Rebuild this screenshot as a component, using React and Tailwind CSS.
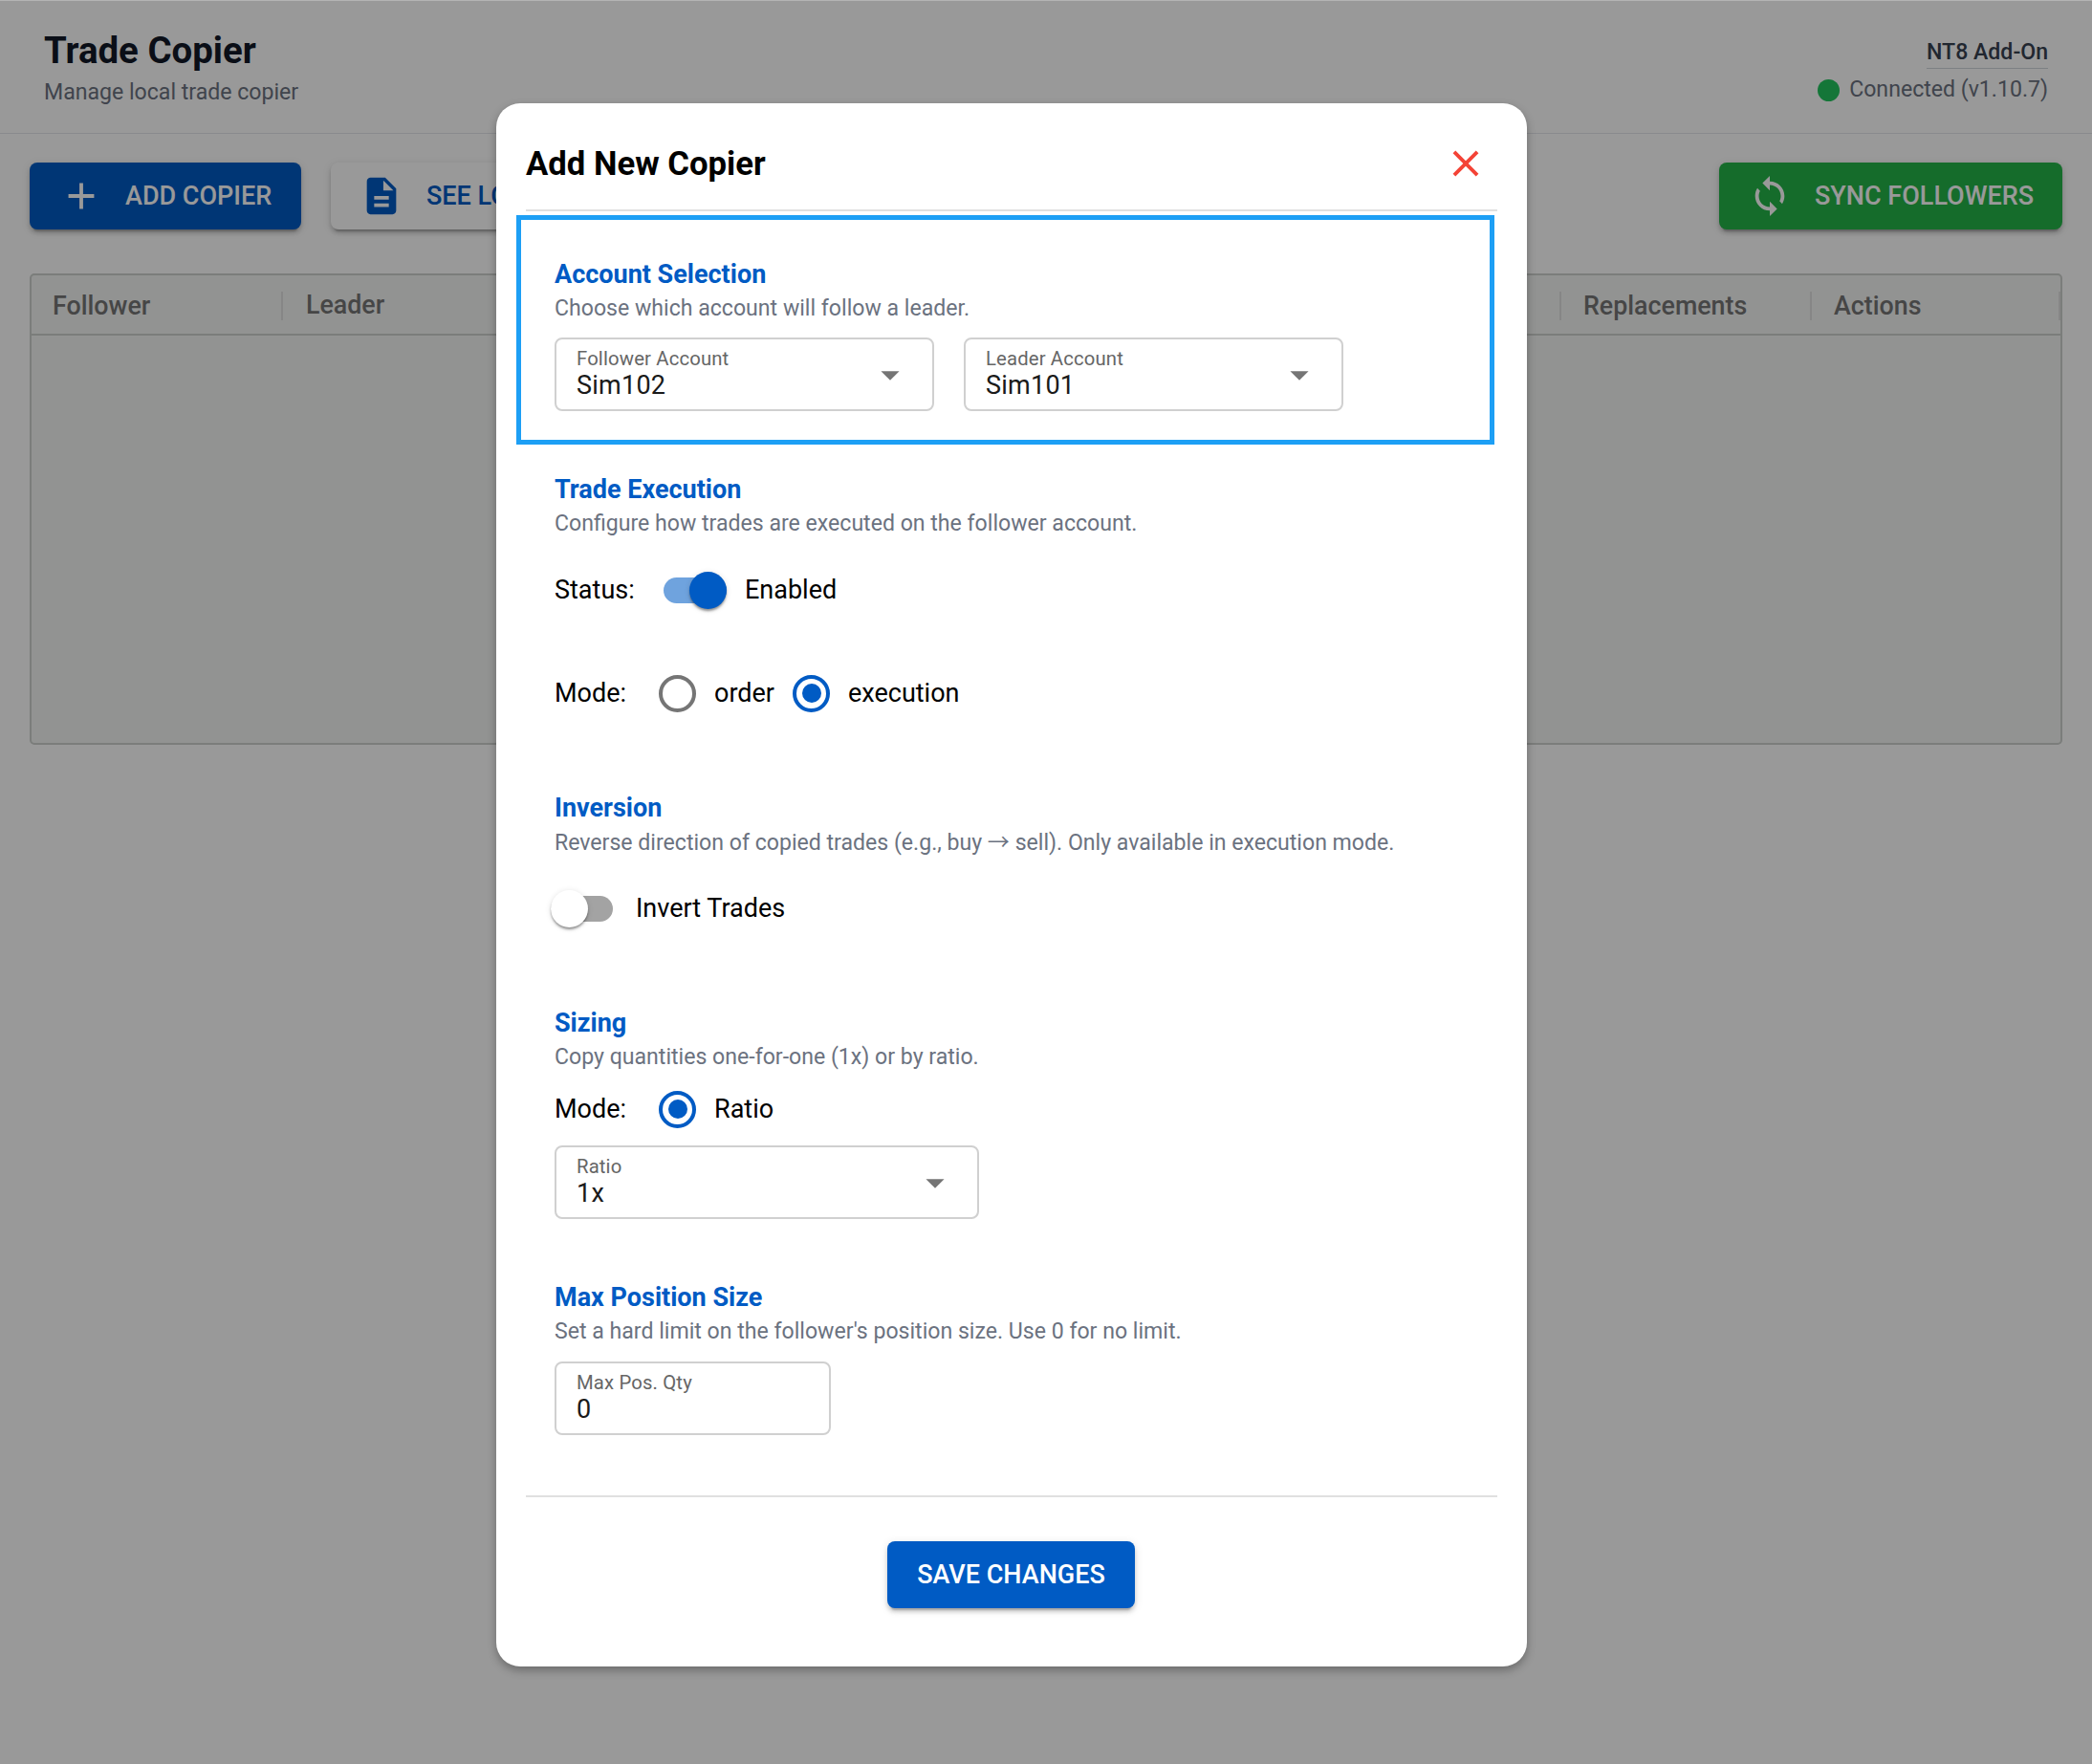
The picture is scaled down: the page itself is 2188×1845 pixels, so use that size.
import React from 'react';

const font = { fontFamily: 'Roboto, sans-serif' };

const btnShadow = 'shadow-[0_6px_2px_-4px_rgba(0,0,0,0.2),0_4px_4px_0_rgba(0,0,0,0.14),0_2px_10px_0_rgba(0,0,0,0.12)]';

function Icon({ d, className }) {
	return (
		<svg viewBox="0 0 24 24" className={className} fill="currentColor">
			<path d={d} />
		</svg>
	);
}

const ADD = 'M19 13h-6v6h-2v-6H5v-2h6V5h2v6h6v2z';
const DOC = 'M14 2H6c-1.1 0-1.99.9-1.99 2L4 20c0 1.1.89 2 1.99 2H18c1.1 0 2-.9 2-2V8l-6-6zm2 16H8v-2h8v2zm0-4H8v-2h8v2zm-3-5V3.5L18.5 9H13z';
const SYNC = 'M12 4V1L8 5l4 4V6c3.31 0 6 2.69 6 6 0 1.01-.25 1.97-.7 2.8l1.46 1.46C19.54 15.03 20 13.57 20 12c0-4.42-3.58-8-8-8zm0 14c-3.31 0-6-2.69-6-6 0-1.01.25-1.97.7-2.8L5.24 7.74C4.46 8.97 4 10.43 4 12c0 4.42 3.58 8 8 8v3l4-4-4-4v3z';
const CLOSE = 'M19 6.41 17.59 5 12 10.59 6.41 5 5 6.41 10.59 12 5 17.59 6.41 19 12 13.41 17.59 19 19 17.59 13.41 12z';
const DROP = 'M7 10l5 5 5-5z';

function SectionHead({ title, sub }) {
	return (
		<div>
			<div className="h-[34px] flex items-center text-[27px] font-bold text-[#005bc4]">{title}</div>
			<div className="h-[36px] pt-[2px] flex items-center text-[23.1px] text-[#6b7280] whitespace-pre">{sub}</div>
		</div>
	);
}

function Field({ label, value, width, arrow = true }) {
	return (
		<div className={`${width} h-[77px] relative border-2 border-[#d0d0d0] rounded-lg pl-[21px] pt-[7px]`}>
			<div className="text-[20.3px] leading-[27px] tracking-[0.15px] text-[#666666]">{label}</div>
			<div className="text-[27px] leading-[29px] tracking-[0.25px] text-[#1a1a1a]">{value}</div>
			{arrow && <Icon d={DROP} className="absolute right-[21px] top-[14px] w-[46px] h-[46px] text-[#757575]" />}
		</div>
	);
}

function Switch({ on }) {
	return (
		<div className={`${on ? 'w-[66px]' : 'w-[65px]'} h-[39px] relative flex items-center shrink-0`}>
			<div className={`w-full h-[27px] rounded-full ${on ? 'bg-[#6fa3de]' : 'bg-[#a3a3a3]'}`} />
			<div
				className={`absolute top-0 w-[39px] h-[39px] rounded-full shadow-[0_3px_3px_-1px_rgba(0,0,0,0.3),0_2px_2px_0_rgba(0,0,0,0.14),0_1px_6px_0_rgba(0,0,0,0.12)] ${
					on ? 'right-0 bg-[#005bc4]' : 'left-0 bg-white'
				}`}
			/>
		</div>
	);
}

function Radio({ on }) {
	return (
		<div
			className={`w-[39px] h-[39px] shrink-0 rounded-full border-[4px] flex items-center justify-center ${
				on ? 'border-[#005bc4]' : 'border-[#757575]'
			}`}
		>
			{on && <div className="w-[20px] h-[20px] rounded-full bg-[#005bc4]" />}
		</div>
	);
}

function Background() {
	return (
		<div className="w-full h-full bg-white">
			<div className="h-[140px] border-b-[1.5px] border-[#e5e7eb] flex justify-between pl-[46px] pr-[46px]">
				<div>
					<div className="mt-[29px] text-[38.4px] leading-[48px] font-bold text-[#111827]">Trade Copier</div>
					<div className="text-[23.1px] leading-[30px] mt-[5px] text-[#6b7280]">Manage local trade copier</div>
				</div>
				<div className="flex flex-col items-end">
					<div className="mt-[38px] h-[34px] border-b border-[#d1d5db] text-[23.1px] font-medium text-[#374151]">NT8 Add-On</div>
					<div className="mt-[5px] flex items-center gap-[10px] text-[23.1px] text-[#6b7280]">
						<div className="w-[23px] h-[23px] rounded-full bg-[#22c55e]" />
						Connected (v1.10.7)
					</div>
				</div>
			</div>

			<div className="mt-[30px] pl-[31px] pr-[31px] flex">
				<div className={`w-[284px] h-[70px] rounded-lg bg-[#005bc4] text-white flex items-center pl-[31px] ${btnShadow}`}>
					<Icon d={ADD} className="w-[46px] h-[46px]" />
					<span className="ml-[23px] text-[27px] font-medium">ADD COPIER</span>
				</div>
				<div className={`ml-[31px] w-[300px] h-[70px] rounded-lg bg-white text-[#005bc4] flex items-center pl-[30px] ${btnShadow}`}>
					<Icon d={DOC} className="w-[46px] h-[46px]" />
					<span className="ml-[24px] text-[27px] font-medium">SEE LOGS</span>
				</div>
				<div className={`ml-auto w-[359px] h-[70px] rounded-lg bg-[#23b448] text-white flex items-center pl-[30px] ${btnShadow}`}>
					<Icon d={SYNC} className="w-[46px] h-[46px]" />
					<span className="ml-[24px] text-[27px] font-medium">SYNC FOLLOWERS</span>
				</div>
			</div>

			<div className="mt-[46px] ml-[31px] w-[2126px] h-[493px] border-2 border-[#cdd0cd] rounded-[5px] bg-[#f4f6f4]">
				<div className="h-[63px] pt-[2px] border-b-2 border-[#cdd0cd] flex items-center text-[26.8px] font-medium text-[#757575] relative">
					<div className="w-[263px] pl-[22px] h-[30px] leading-[30px] border-r-2 border-[#e0e0e0]">Follower</div>
					<div className="pl-[24px]">Leader</div>
					<div className="ml-auto w-[262px] pl-[23px] h-[30px] leading-[30px] border-l-2 border-[#e0e0e0]">Replacements</div>
					<div className="w-[262px] pl-[23px] h-[30px] leading-[30px] border-l-2 border-r-2 border-[#e0e0e0]">Actions</div>
				</div>
			</div>
		</div>
	);
}

function Modal() {
	return (
		<div className="ml-[519px] mt-[108px] w-[1078px] h-[1635px] bg-white rounded-[25px] px-[31px] shadow-[0_4px_10px_rgba(0,0,0,0.3)] flex flex-col">
			<div className="h-[111px] pt-[15px] flex items-center justify-between">
				<div className="text-[34.7px] font-bold text-black">Add New Copier</div>
				<Icon d={CLOSE} className="w-[46px] h-[46px] text-[#f44336] mr-[10px]" />
			</div>
			<div className="h-[2px] bg-[#e0e0e0]" />

			<div className="-ml-[10px] mt-[4px] w-[1023px] h-[240px] border-[5px] border-[#1d9ff5] pl-[35px] pt-[40px]">
				<SectionHead title="Account Selection" sub="Choose which account will follow a leader." />
				<div className="mt-[13px] flex gap-[31px]">
					<Field label="Follower Account" value="Sim102" width="w-[397px]" />
					<Field label="Leader Account" value="Sim101" width="w-[397px]" />
				</div>
			</div>

			<div className="pl-[30px] text-[27px] text-black">
				<div className="mt-[30px]">
					<SectionHead title="Trade Execution" sub="Configure how trades are executed on the follower account." />
				</div>
				<div className="mt-[32px] h-[40px] flex items-center">
					<span className="w-[114px]">Status:</span>
					<Switch on />
					<span className="ml-[19px]">Enabled</span>
				</div>
				<div className="mt-[68px] h-[40px] flex items-center">
					<span className="w-[109px]">Mode:</span>
					<Radio />
					<span className="ml-[19px] w-[82px]">order</span>
					<Radio on />
					<span className="ml-[19px]">execution</span>
				</div>

				<div className="mt-[83px]">
					<SectionHead
						title="Inversion"
						sub={
							<span>
								Reverse direction of copied trades (e.g., buy <span className="font-['Noto_Sans_CJK_JP']">→</span> sell). Only available in execution mode.
							</span>
						}
					/>
				</div>
				<div className="mt-[32px] -ml-[4px] h-[40px] flex items-center">
					<Switch />
					<span className="ml-[24px]">Invert Trades</span>
				</div>

				<div className="mt-[83px]">
					<SectionHead title="Sizing" sub="Copy quantities one-for-one (1x) or by ratio." />
				</div>
				<div className="mt-[17px] h-[40px] flex items-center">
					<span className="w-[109px]">Mode:</span>
					<Radio on />
					<span className="ml-[19px]">Ratio</span>
				</div>
				<div className="mt-[18px]">
					<Field label="Ratio" value="1x" width="w-[444px]" />
				</div>

				<div className="mt-[65px]">
					<SectionHead title="Max Position Size" sub="Set a hard limit on the follower's position size. Use 0 for no limit." />
				</div>
				<div className="mt-[14px]">
					<Field label="Max Pos. Qty" value="0" width="w-[289px]" arrow={false} />
				</div>
			</div>

			<div className="mt-[63px] h-[2px] shrink-0 bg-[#e0e0e0]" />
			<div className="mt-[46px] flex justify-center">
				<div className={`w-[259px] h-[70px] mr-[1px] rounded-lg bg-[#005bc4] text-white text-[27px] font-medium flex items-center justify-center ${btnShadow}`}>
					SAVE CHANGES
				</div>
			</div>
		</div>
	);
}

export default function App() {
	return (
		<div className="relative w-full h-[1845px] overflow-hidden" style={font}>
			<Background />
			<div className="absolute inset-0 bg-black/40 overflow-hidden">
				<div className="absolute top-0 inset-x-0 h-px bg-[#b4b4b4]" />
				<Modal />
			</div>
		</div>
	);
}
